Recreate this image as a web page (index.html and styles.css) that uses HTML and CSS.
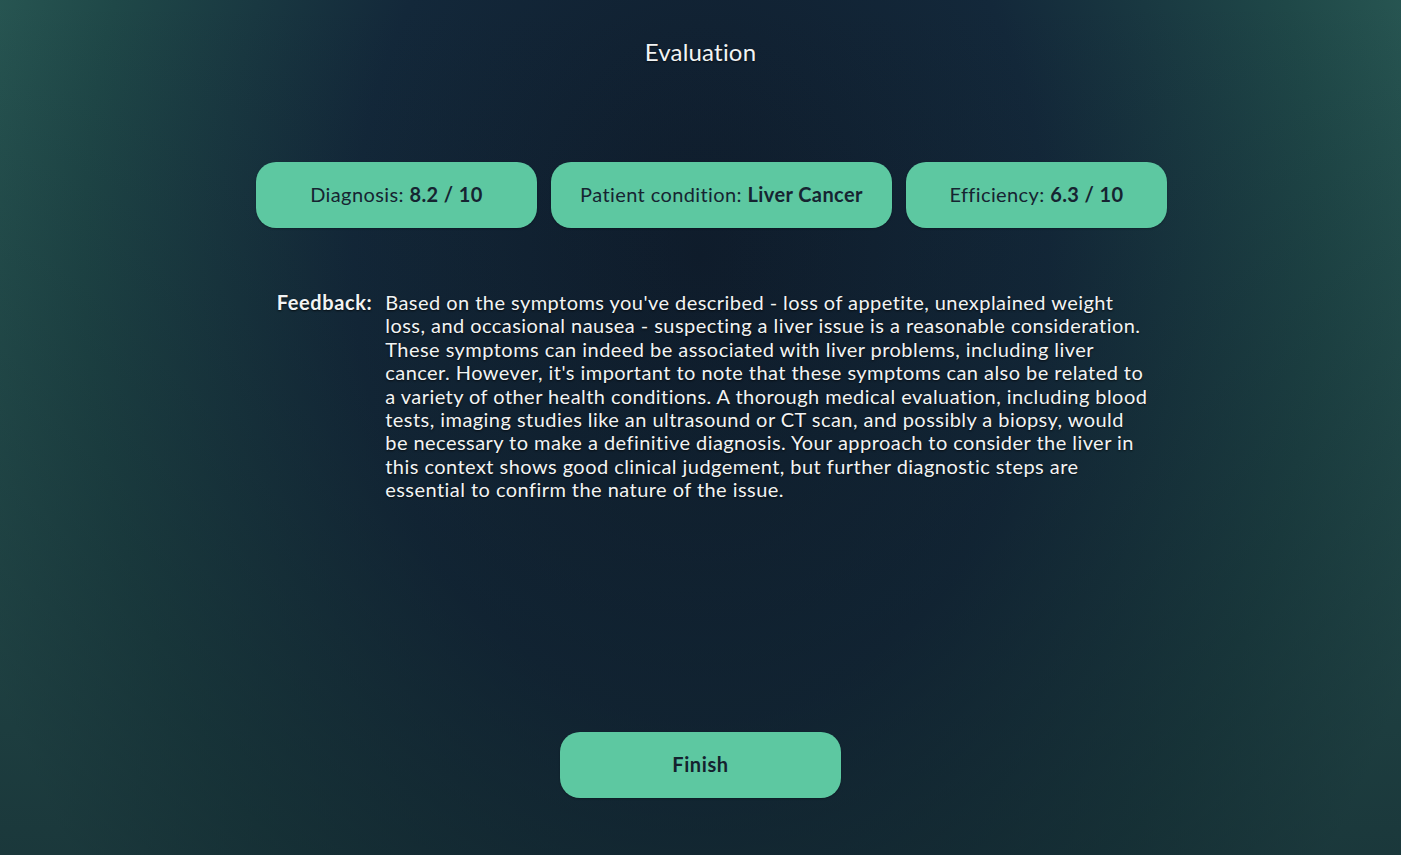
FILE: index.html
```html
<!DOCTYPE html>
<html lang="en">
<head>
<meta charset="utf-8">
<title>Evaluation</title>
<link rel="stylesheet" href="styles.css">
</head>
<body>
<main class="page">
  <h1 class="title">Evaluation</h1>
  <section class="scores">
    <div class="card card-diagnosis">Diagnosis: <b>8.2 / 10</b></div>
    <div class="card card-condition">Patient condition: <b>Liver Cancer</b></div>
    <div class="card card-efficiency">Efficiency: <b>6.3 / 10</b></div>
  </section>
  <section class="feedback">
    <div class="feedback-label">Feedback:</div>
    <p class="feedback-text">Based on the symptoms you've described - loss of appetite, unexplained weight loss, and occasional nausea - suspecting a liver issue is a reasonable consideration. These symptoms can indeed be associated with liver problems, including liver cancer. However, it's important to note that these symptoms can also be related to a variety of other health conditions. A thorough medical evaluation, including blood tests, imaging studies like an ultrasound or CT scan, and possibly a biopsy, would be necessary to make a definitive diagnosis. Your approach to consider the liver in this context shows good clinical judgement, but further diagnostic steps are essential to confirm the nature of the issue.</p>
  </section>
  <button class="finish">Finish</button>
</main>
</body>
</html>
```
FILE: styles.css
```css
html, body {
  margin: 0;
  height: 100%;
}
body {
  font-family: Lato, "Open Sans", sans-serif;
  font-variant-ligatures: no-common-ligatures;
  color: #f2f4f4;
  background:
    linear-gradient(to bottom, rgba(14, 28, 38, 0) 0%, rgba(14, 28, 38, 0.55) 100%),
    radial-gradient(ellipse 55% 120% at 50% 30%, #0f1c2c 0%, #13283a 45%, #1f4848 80%, #2a5a55 100%);
  overflow: hidden;
}
.page {
  height: 855px;
  display: flex;
  flex-direction: column;
  align-items: center;
}
.title {
  margin: 37px 0 0;
  font-size: 24px;
  font-weight: 400;
  line-height: 29px;
  letter-spacing: 0.2px;
  text-shadow: 0 1px 2px rgba(0, 0, 0, 0.6);
}
.scores {
  margin-top: 96px;
  padding-left: 22px;
  display: flex;
  gap: 14px;
}
.card {
  height: 66px;
  box-sizing: border-box;
  padding-bottom: 3px;
  display: flex;
  align-items: center;
  justify-content: center;
  background: #5dc8a1;
  border-radius: 20px;
  color: #162431;
  font-size: 20px;
  letter-spacing: 0.4px;
  white-space: pre;
  box-shadow: 0 1px 2px rgba(0, 0, 0, 0.25);
}
.card b { font-weight: 700; }
.card-diagnosis { width: 281px; }
.card-condition { width: 341px; }
.card-efficiency { width: 261px; }
.feedback {
  margin-top: 63px;
  display: flex;
  gap: 13px;
  padding-left: 25px;
  font-size: 20px;
  line-height: 23.4px;
  letter-spacing: 0.45px;
  text-shadow: 0 1px 2px rgba(0, 0, 0, 0.7);
}
.feedback-label {
  font-weight: 700;
  letter-spacing: 0.6px;
}
.feedback-text {
  margin: 0;
  width: 764px;
}
.finish {
  margin-top: auto;
  margin-bottom: 57px;
  padding-bottom: 3px;
  width: 281px;
  height: 66px;
  border: none;
  border-radius: 20px;
  background: #5dc8a1;
  color: #14222e;
  font-family: Lato, "Open Sans", sans-serif;
  font-size: 20px;
  font-weight: 700;
  letter-spacing: 0.6px;
  box-shadow: 0 1px 2px rgba(0, 0, 0, 0.25);
}
```
